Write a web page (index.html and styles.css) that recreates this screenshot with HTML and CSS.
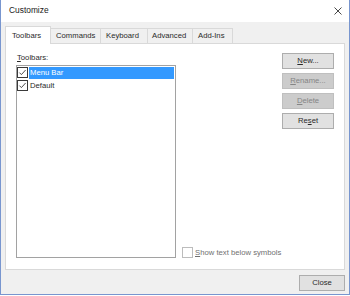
FILE: index.html
```html
<!DOCTYPE html>
<html>
<head>
<meta charset="utf-8">
<link rel="stylesheet" href="styles.css">
</head>
<body>
<div class="window">
  <div class="titlebar">
    <span class="title">Customize</span>
    <svg class="close-x" width="8" height="8" viewBox="0 0 8 8"><path d="M0.5 0.5 L7.5 7.5 M7.5 0.5 L0.5 7.5" stroke="#333" stroke-width="0.9" fill="none"/></svg>
  </div>
  <div class="body">
    <div class="tabs">
      <div class="tab active">Toolbars</div>
      <div class="tab tab-commands">Commands</div>
      <div class="tab tab-keyboard">Keyboard</div>
      <div class="tab tab-advanced">Advanced</div>
      <div class="tab tab-addins">Add-Ins</div>
    </div>
    <div class="panel">
      <div class="leftcol">
        <div class="label"><u>T</u>oolbars:</div>
        <div class="list">
          <div class="row">
            <svg class="cb" width="11" height="11" viewBox="0 0 11 11"><rect x="0.5" y="0.5" width="10" height="10" fill="#fff" stroke="#3a3a3a"/><path d="M2.4 5.6 L4.4 7.6 L8.6 3" stroke="#3a3a3a" stroke-width="0.9" fill="none"/></svg>
            <span class="item selected">Menu Bar</span>
          </div>
          <div class="row">
            <svg class="cb" width="11" height="11" viewBox="0 0 11 11"><rect x="0.5" y="0.5" width="10" height="10" fill="#fff" stroke="#3a3a3a"/><path d="M2.4 5.6 L4.4 7.6 L8.6 3" stroke="#3a3a3a" stroke-width="0.9" fill="none"/></svg>
            <span class="item">Default</span>
          </div>
        </div>
      </div>
      <div class="midcol">
        <div class="check-disabled">
          <span class="box"></span>
          <span class="check-text"><u>S</u>how text below symbols</span>
        </div>
      </div>
      <div class="btncol">
        <div class="btn"><u>N</u>ew...</div>
        <div class="btn disabled"><u>R</u>ename...</div>
        <div class="btn disabled"><u>D</u>elete</div>
        <div class="btn">Re<u>s</u>et</div>
      </div>
    </div>
    <div class="footer">
      <div class="btn close">Close</div>
    </div>
  </div>
</div>
</body>
</html>
```
FILE: styles.css
```css
* { box-sizing: border-box; }
html, body { margin: 0; padding: 0; background: #fff; }
body {
  font-family: "Liberation Sans", Arial, sans-serif;
  font-size: 7.7px;
  color: #2a2a2a;
}
u { text-decoration: underline; text-underline-offset: 1px; }
.window {
  width: 350px;
  height: 295px;
  border: 1px solid #7896cf;
  border-top: none;
  display: flex;
  flex-direction: column;
  background: #f0f0f0;
}
.titlebar {
  height: 22px;
  background: #fff;
  display: flex;
  align-items: center;
  justify-content: space-between;
  padding: 0 7px 2px 8px;
}
.title { font-size: 8.4px; color: #1a1a1a; }
.close-x { display: block; margin-top: 1px; }
.body {
  flex: 1;
  display: flex;
  flex-direction: column;
  padding: 4px 4px 3px 4px;
}
.tabs {
  display: flex;
  align-items: flex-end;
  height: 18px;
  margin-bottom: -1px;
  position: relative;
  z-index: 1;
}
.tab {
  height: 15px;
  margin-bottom: 1px;
  border: 1px solid #d9d9d9;
  border-bottom: none;
  background: #f0f0f0;
  padding: 1px 0 0 5px;
  line-height: 12px;
  margin-left: -1px;
  white-space: nowrap;
}
.tab-commands { width: 51px; }
.tab-keyboard { width: 48px; }
.tab-advanced { width: 46px; padding-left: 4px; }
.tab-addins { width: 41px; }
.tab:first-child { margin-left: 0; }
.tab.active {
  width: 46px;
  height: 18px;
  margin-bottom: 0;
  background: #fff;
  padding: 3px 0 0 6px;
  position: relative;
  z-index: 2;
}
.panel {
  flex: 1;
  background: #fff;
  border: 1px solid #d9d9d9;
  display: grid;
  grid-template-columns: 160px 1fr 52px;
  padding: 9px 10px 11px 10px;
}
.leftcol { display: flex; flex-direction: column; }
.label { height: 12px; line-height: 10px; padding-left: 1px; }
.list {
  flex: 1;
  border: 1px solid #a2a2a2;
}
.row {
  height: 13px;
  display: flex;
  align-items: center;
}
.cb { display: block; flex: none; margin-right: 1px; }
.item { line-height: 12px; padding: 0 1px; }
.item.selected {
  background: #3399ff;
  color: #fff;
  flex: 1;
  margin-right: 1px;
}
.midcol {
  display: flex;
  align-items: flex-end;
  padding-left: 6px;
}
.check-disabled { display: flex; align-items: center; height: 11px; }
.box {
  width: 11px;
  height: 11px;
  border: 1px solid #bcbcbc;
  background: #fff;
  margin-right: 2px;
}
.check-text { color: #707070; }
.btncol {
  display: flex;
  flex-direction: column;
  gap: 4px;
}
.btn {
  height: 16px;
  background: #e1e1e1;
  border: 1px solid #adadad;
  text-align: center;
  line-height: 14px;
}
.btn.disabled {
  background: #cccccc;
  border-color: #bfbfbf;
  color: #858585;
}
.footer {
  display: flex;
  justify-content: flex-end;
  margin-top: 5px;
}
.btn.close { width: 46px; }
```
